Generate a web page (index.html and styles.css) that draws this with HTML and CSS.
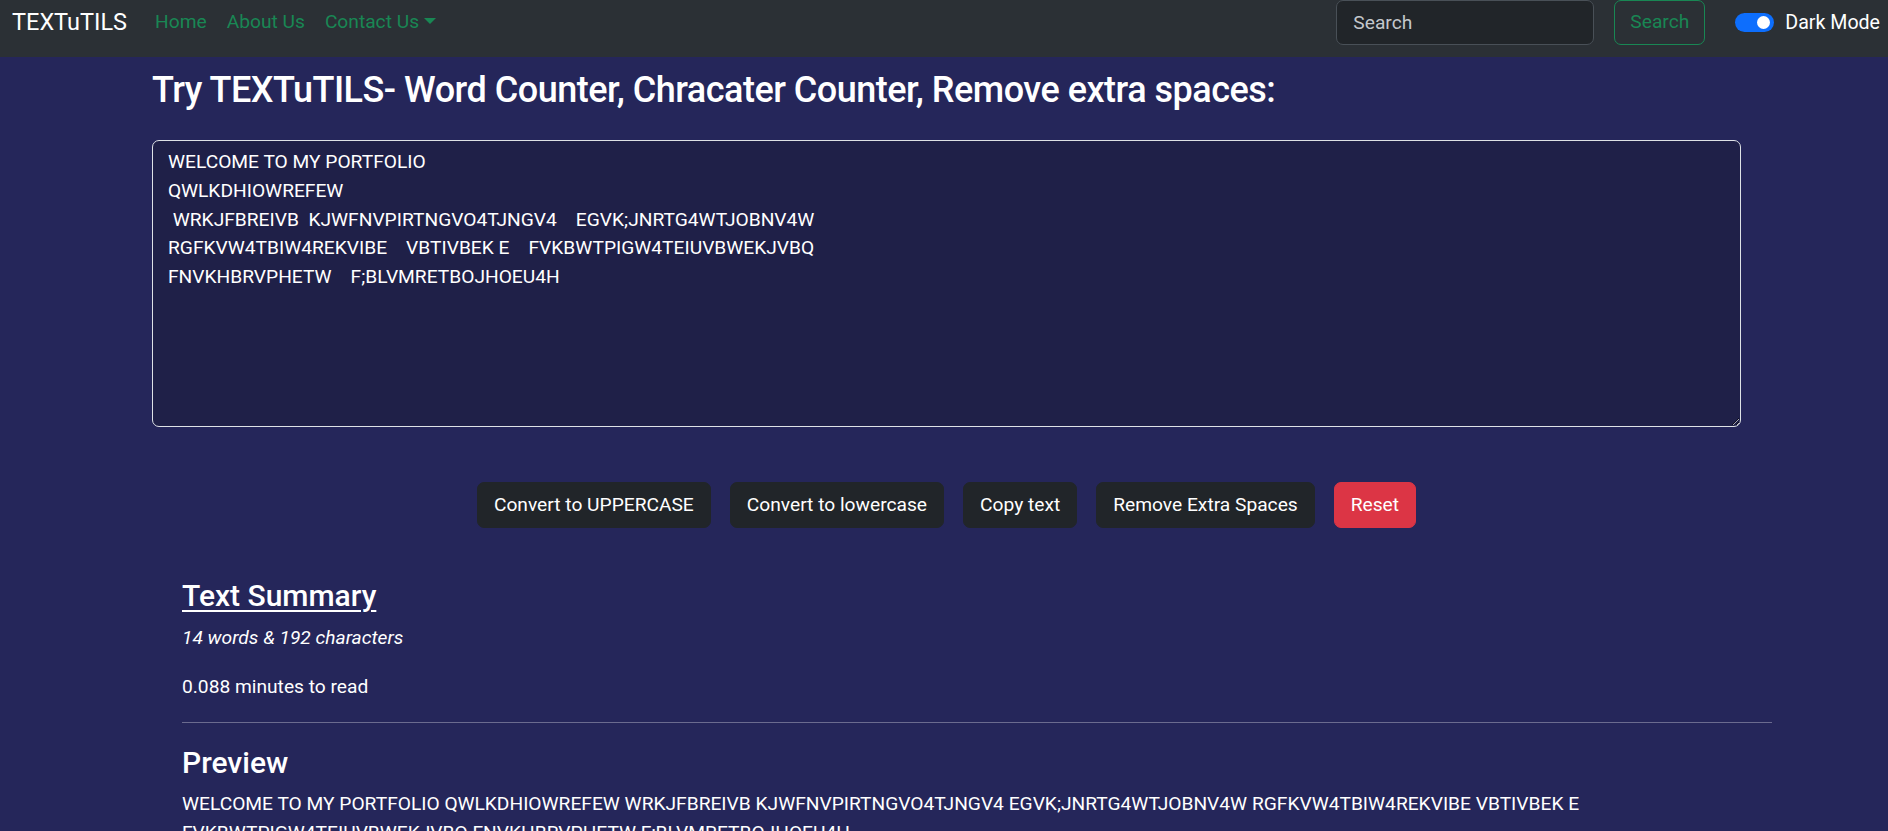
FILE: index.html
```html
<!DOCTYPE html>
<html lang="en">
<head>
<meta charset="utf-8">
<title>TEXTuTILS</title>
<link rel="stylesheet" href="styles.css">
</head>
<body>
<nav class="navbar">
  <a class="brand" href="#">TEXTuTILS</a>
  <ul class="nav-links">
    <li><a href="#">Home</a></li>
    <li><a href="#">About Us</a></li>
    <li><a href="#" class="dropdown">Contact Us</a></li>
  </ul>
  <form class="search">
    <input class="search-input" type="search" placeholder="Search">
    <button class="search-btn" type="button">Search</button>
  </form>
  <div class="switch">
    <span class="track"><span class="knob"></span></span>
    <span class="switch-label">Dark Mode</span>
  </div>
</nav>

<main class="page">
  <h1 class="title">Try TEXTuTILS- Word Counter, Chracater Counter, Remove extra spaces:</h1>
  <textarea class="editor">WELCOME TO MY PORTFOLIO
QWLKDHIOWREFEW
 WRKJFBREIVB  KJWFNVPIRTNGVO4TJNGV4    EGVK;JNRTG4WTJOBNV4W
RGFKVW4TBIW4REKVIBE    VBTIVBEK E    FVKBWTPIGW4TEIUVBWEKJVBQ
FNVKHBRVPHETW    F;BLVMRETBOJHOEU4H</textarea>
  <div class="actions">
    <button class="btn" type="button">Convert to UPPERCASE</button>
    <button class="btn" type="button">Convert to lowercase</button>
    <button class="btn" type="button">Copy text</button>
    <button class="btn" type="button">Remove Extra Spaces</button>
    <button class="btn btn-danger" type="button">Reset</button>
  </div>
</main>

<section class="summary">
  <h2 class="summary-title">Text Summary</h2>
  <p class="count">14 words &amp; 192 characters</p>
  <p class="read">0.088 minutes to read</p>
  <hr class="divider">
  <h2 class="preview-title">Preview</h2>
  <p class="preview">WELCOME TO MY PORTFOLIO QWLKDHIOWREFEW WRKJFBREIVB KJWFNVPIRTNGVO4TJNGV4 EGVK;JNRTG4WTJOBNV4W RGFKVW4TBIW4REKVIBE VBTIVBEK E FVKBWTPIGW4TEIUVBWEKJVBQ FNVKHBRVPHETW F;BLVMRETBOJHOEU4H</p>
</section>
</body>
</html>
```

FILE: styles.css
```css
* { box-sizing: border-box; }

html, body { height: 100%; }

body {
  margin: 0;
  background: #25265a;
  color: #ffffff;
  font-family: "Segoe UI", Roboto, "Noto Sans", sans-serif;
  font-size: 19.2px;
  line-height: 1.5;
  overflow: hidden;
}

/* ---------- navbar ---------- */
.navbar {
  display: flex;
  align-items: center;
  height: 57px;
  padding: 0 8px 12px 12px;
  background: #2b3035;
}

.brand {
  font-size: 23.5px;
  color: #ffffff;
  text-decoration: none;
  margin-right: 18px;
}

.nav-links {
  display: flex;
  list-style: none;
  margin: 0;
  padding: 0;
}

.nav-links a {
  display: block;
  padding: 0 10px;
  color: #198754;
  text-decoration: none;
}

.dropdown::after {
  content: "";
  display: inline-block;
  margin-left: 5px;
  vertical-align: 4px;
  border-top: 6px solid #198754;
  border-left: 6px solid transparent;
  border-right: 6px solid transparent;
}

.search {
  display: flex;
  margin-left: auto;
}

.search-input {
  width: 258px;
  height: 45px;
  padding: 0 16px;
  background: #212529;
  border: 1px solid #495057;
  border-radius: 7px;
  color: #ffffff;
  font: inherit;
}

.search-input::placeholder { color: #c4c8cc; }

.search-btn {
  width: 91px;
  height: 45px;
  margin-left: 20px;
  background: transparent;
  border: 1px solid #198754;
  border-radius: 7px;
  color: #198754;
  font: inherit;
}

.switch {
  display: flex;
  align-items: center;
  margin-left: 30px;
}

.track {
  position: relative;
  display: block;
  width: 39px;
  height: 19px;
  border-radius: 10px;
  background: #0d6efd;
}

.knob {
  position: absolute;
  top: 3px;
  right: 4px;
  width: 13px;
  height: 13px;
  border-radius: 50%;
  background: #ffffff;
}

.switch-label {
  margin-left: 11px;
  font-size: 19.6px;
}

/* ---------- main ---------- */
.page {
  padding: 0 147px 0 152px;
}

.title {
  margin: 11px 0 27px;
  font-size: 36px;
  font-weight: 500;
  letter-spacing: -0.5px;
  line-height: 1.25;
}

.editor {
  display: block;
  width: 100%;
  height: 287px;
  padding: 7px 15px;
  background: #1f2048;
  color: #ffffff;
  border: 1px solid #dee2e6;
  border-radius: 7px;
  font: inherit;
  line-height: 1.5;
  resize: vertical;
}

.actions {
  display: flex;
  justify-content: center;
  gap: 19px;
  margin-top: 55px;
}

.btn {
  height: 46px;
  padding: 0 16px;
  background: #212529;
  border: 1px solid #212529;
  border-radius: 7px;
  color: #ffffff;
  font: inherit;
}

.btn-danger {
  background: #dc3545;
  border-color: #dc3545;
}

/* ---------- summary ---------- */
.summary {
  margin: 50px 116px 0 182px;
}

.summary-title,
.preview-title {
  font-size: 30px;
  font-weight: 500;
  line-height: 1.2;
  margin: 0 0 9.6px;
}

.summary-title {
  text-decoration: underline;
  text-decoration-thickness: 2px;
  text-underline-offset: 4px;
}

.count {
  font-style: italic;
  margin: 0 0 21px;
}

.read {
  margin: 0 0 20px;
}

.divider {
  margin: 0 0 22px;
  border: 0;
  border-top: 1px solid rgba(255, 255, 255, 0.32);
}

.preview-title {
  margin-bottom: 8.6px;
}

.preview {
  margin: 0;
}
```
